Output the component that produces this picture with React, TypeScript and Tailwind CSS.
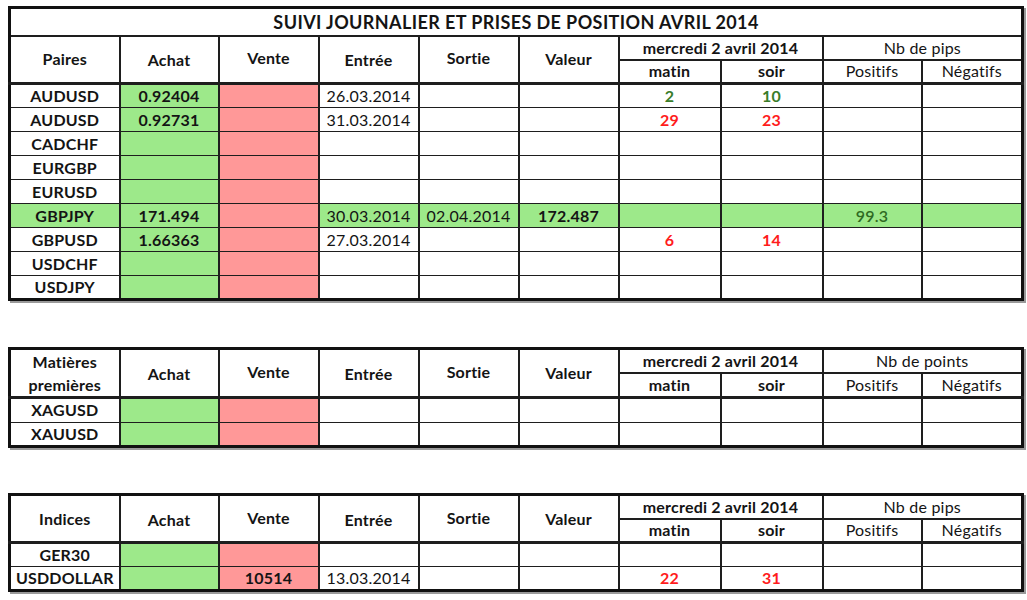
import React from 'react';

type Num = { v: string; c: 'red' | 'green' };

type Row = {
  label: string;
  achat?: string;
  vente?: string;
  entree?: string;
  sortie?: string;
  valeur?: string;
  matin?: Num;
  soir?: Num;
  pos?: string;
  hl?: boolean;
};

const numColor = { red: 'text-[#ff1c1c]', green: 'text-[#3a7d2a]' };

const fx: Row[] = [
  { label: 'AUDUSD', achat: '0.92404', entree: '26.03.2014', matin: { v: '2', c: 'green' }, soir: { v: '10', c: 'green' } },
  { label: 'AUDUSD', achat: '0.92731', entree: '31.03.2014', matin: { v: '29', c: 'red' }, soir: { v: '23', c: 'red' } },
  { label: 'CADCHF' },
  { label: 'EURGBP' },
  { label: 'EURUSD' },
  { label: 'GBPJPY', achat: '171.494', entree: '30.03.2014', sortie: '02.04.2014', valeur: '172.487', pos: '99.3', hl: true },
  { label: 'GBPUSD', achat: '1.66363', entree: '27.03.2014', matin: { v: '6', c: 'red' }, soir: { v: '14', c: 'red' } },
  { label: 'USDCHF' },
  { label: 'USDJPY' },
];

const metals: Row[] = [{ label: 'XAGUSD' }, { label: 'XAUUSD' }];

const indices: Row[] = [
  { label: 'GER30' },
  { label: 'USDDOLLAR', vente: '10514', entree: '13.03.2014', matin: { v: '22', c: 'red' }, soir: { v: '31', c: 'red' } },
];

const td = 'border border-[#1e1e1e] h-[24px] p-0 text-center align-middle leading-none';
const th = 'border-2 border-[#1e1e1e] p-0 text-center align-middle leading-none';

function Sheet({ title, first, unit, rows }: { title?: string; first: React.ReactNode; unit: string; rows: Row[] }) {
  return (
    <table className="table-fixed border-collapse border-[3px] border-[#111] w-[1013px] shadow-[2px_2px_0_#9a9a9a] text-[16px] tracking-[0.2px] text-[#141414]">
      <colgroup>
        <col className="w-[110px]" />
        <col className="w-[99px]" />
        <col className="w-[100px]" />
        <col className="w-[100px]" />
        <col className="w-[100px]" />
        <col className="w-[100px]" />
        <col className="w-[102px]" />
        <col className="w-[102px]" />
        <col className="w-[99px]" />
        <col className="w-[101px]" />
      </colgroup>
      <thead>
        {title && (
          <tr>
            <th colSpan={10} className={`${th} h-[28px] font-bold text-[18px] tracking-[0.4px]`}>{title}</th>
          </tr>
        )}
        <tr>
          <th rowSpan={2} className={`${th} border-b-[3px] font-bold`}>{first}</th>
          <th rowSpan={2} className={`${th} border-b-[3px] font-bold pt-[2px]`}>Achat</th>
          <th rowSpan={2} className={`${th} border-b-[3px] font-bold pb-[2px]`}>Vente</th>
          <th rowSpan={2} className={`${th} border-b-[3px] font-bold pt-[2px]`}>Entrée</th>
          <th rowSpan={2} className={`${th} border-b-[3px] font-bold pb-[2px]`}>Sortie</th>
          <th rowSpan={2} className={`${th} border-b-[3px] font-bold`}>Valeur</th>
          <th colSpan={2} className={`${th} h-[24px] font-bold`}>mercredi 2 avril 2014</th>
          <th colSpan={2} className={`${th} h-[24px] font-normal`}>{unit}</th>
        </tr>
        <tr>
          <th className={`${th} border-b-[3px] h-[24px] font-bold`}>matin</th>
          <th className={`${th} border-b-[3px] h-[24px] font-bold`}>soir</th>
          <th className={`${th} border-b-[3px] h-[24px] font-normal`}>Positifs</th>
          <th className={`${th} border-b-[3px] h-[24px] font-normal`}>Négatifs</th>
        </tr>
      </thead>
      <tbody>
        {rows.map((r, i) => {
          const bg = r.hl ? 'bg-[#9de98a]' : '';
          return (
            <tr key={i}>
              <td className={`${td} ${bg} font-bold border-r-2`}>{r.label}</td>
              <td className={`${td} bg-[#9de98a] font-bold border-r-2`}>{r.achat}</td>
              <td className={`${td} bg-[#ff9898] font-bold border-r-2`}>{r.vente}</td>
              <td className={`${td} ${bg} border-r-2`}>{r.entree}</td>
              <td className={`${td} ${bg} border-r-2`}>{r.sortie}</td>
              <td className={`${td} ${bg} font-bold border-r-2`}>{r.valeur}</td>
              <td className={`${td} ${bg} font-bold border-r-2 ${r.matin ? numColor[r.matin.c] : ''}`}>{r.matin?.v}</td>
              <td className={`${td} ${bg} font-bold border-r-2 ${r.soir ? numColor[r.soir.c] : ''}`}>{r.soir?.v}</td>
              <td className={`${td} ${bg} border-r-2 text-[#2f6a22] font-semibold`}>{r.pos}</td>
              <td className={`${td} ${bg}`}></td>
            </tr>
          );
        })}
      </tbody>
    </table>
  );
}

export default function App() {
  return (
    <div className="bg-white w-[1027px] h-[600px] pt-[6px] pl-[8px] font-['Lato','Liberation_Sans',sans-serif] flex flex-col gap-[46px]">
      <Sheet title="SUIVI JOURNALIER ET PRISES DE POSITION AVRIL 2014" first="Paires" unit="Nb de pips" rows={fx} />
      <Sheet
        first={<span className="block leading-[23px]">Matières<br />premières</span>}
        unit="Nb de points"
        rows={metals}
      />
      <Sheet first="Indices" unit="Nb de pips" rows={indices} />
    </div>
  );
}
